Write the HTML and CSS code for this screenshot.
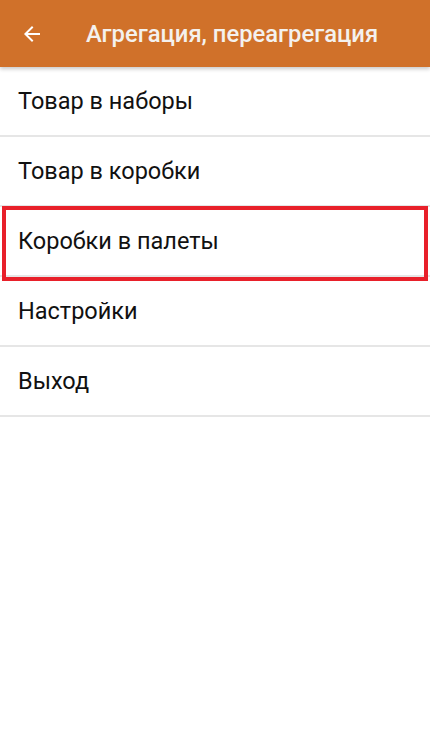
FILE: index.html
```html
<!DOCTYPE html>
<html lang="ru">
<head>
<meta charset="utf-8">
<link rel="stylesheet" href="styles.css">
</head>
<body>
<header class="appbar">
  <svg class="back" width="24" height="24" viewBox="0 0 24 24"><path d="M20 11H7.83l5.59-5.59L12 4l-8 8 8 8 1.41-1.41L7.83 13H20v-2z" fill="#fff"/></svg>
  <h1 class="title">Агрегация, переагрегация</h1>
</header>
<ul class="menu">
  <li class="item">Товар в наборы</li>
  <li class="item">Товар в коробки</li>
  <li class="item highlighted">Коробки в палеты</li>
  <li class="item">Настройки</li>
  <li class="item">Выход</li>
</ul>
</body>
</html>
```
FILE: styles.css
```css
html, body { margin: 0; padding: 0; background: #fff; }
body { font-family: Roboto, "Noto Sans", sans-serif; width: 430px; height: 739px; overflow: hidden; }
.appbar {
  height: 67px;
  background: #D0712A;
  display: flex;
  align-items: center;
  box-shadow: 0 2px 4px rgba(0,0,0,0.22);
  position: relative;
  z-index: 1;
}
.back { margin-left: 20px; flex: none; }
.title {
  margin: 0 0 0 42px;
  font-size: 23.8px;
  font-weight: 500;
  color: #f4f1ee;
}
.menu { list-style: none; margin: 0; padding: 0; }
.item {
  height: 68px;
  border-bottom: 2px solid #e6e6e6;
  display: flex;
  align-items: center;
  padding-left: 18px;
  font-size: 23.5px;
  color: #111;
  position: relative;
}
.highlighted::after {
  content: "";
  position: absolute;
  left: 2px;
  right: 2px;
  top: -1px;
  bottom: -6px;
  border: 4px solid #E8202A;
}
```
